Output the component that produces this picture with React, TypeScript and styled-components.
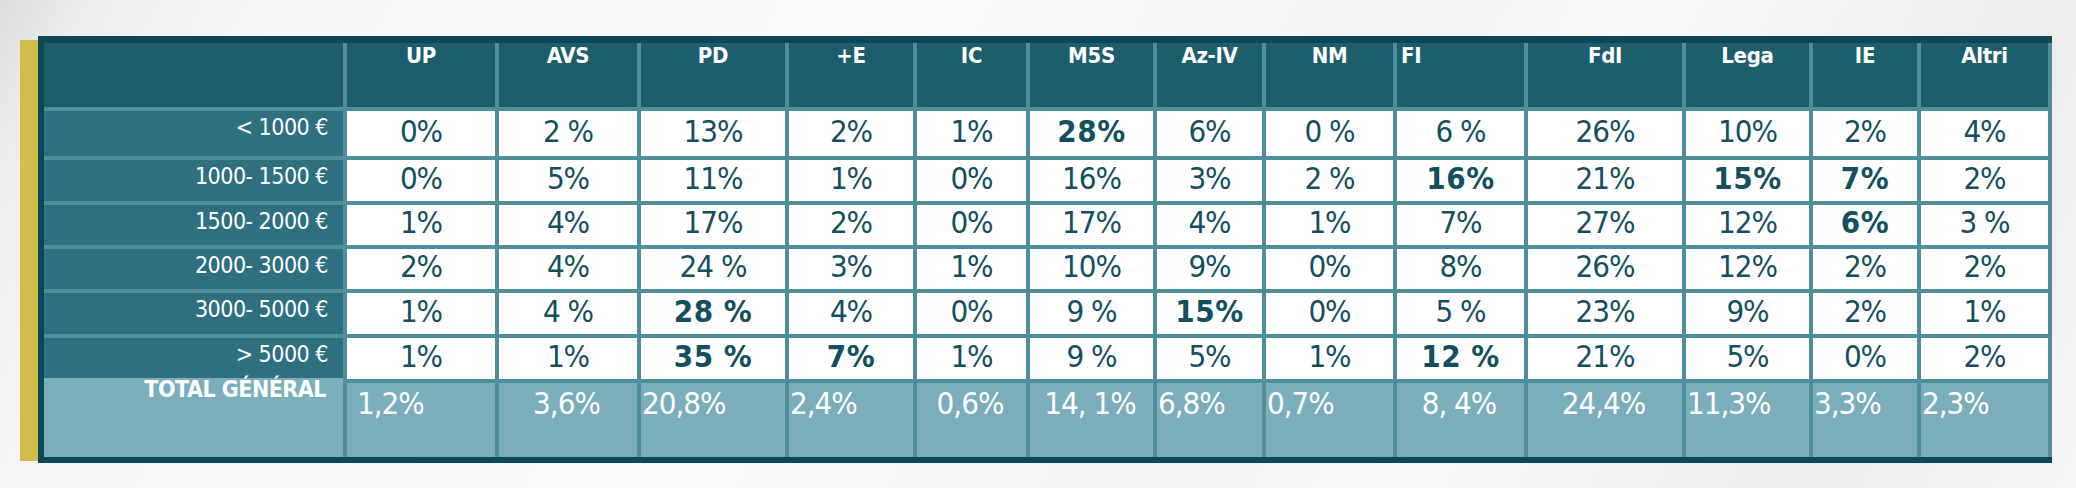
import { createGlobalStyle } from 'styled-components';
import styled from 'styled-components';

type Align = 'left' | 'center' | 'right';

const narrow =
	"'Liberation Sans Narrow', 'Arial Narrow', 'DejaVu Sans Condensed', 'Liberation Sans', sans-serif";
const condensed = "'DejaVu Sans Condensed', 'DejaVu Sans', 'Liberation Sans', sans-serif";

const parties = ['UP', 'AVS', 'PD', '+E', 'IC', 'M5S', 'Az-IV', 'NM', 'FI', 'FdI', 'Lega', 'IE', 'Altri'];
const widths = [148, 138, 144, 124, 109, 123, 105, 127, 127, 154, 123, 104, 127];

// '*' at the start marks a bold cell
const rows: { label: string; values: string[] }[] = [
	{
		label: '< 1000 €',
		values: ['0%', '2 %', '13%', '2%', '1%', '*28%', '6%', '0 %', '6 %', '26%', '10%', '2%', '4%'],
	},
	{
		label: '1000- 1500 €',
		values: ['0%', '5%', '11%', '1%', '0%', '16%', '3%', '2 %', '*16%', '21%', '*15%', '*7%', '2%'],
	},
	{
		label: '1500- 2000 €',
		values: ['1%', '4%', '17%', '2%', '0%', '17%', '4%', '1%', '7%', '27%', '12%', '*6%', '3 %'],
	},
	{
		label: '2000- 3000 €',
		values: ['2%', '4%', '24 %', '3%', '1%', '10%', '9%', '0%', '8%', '26%', '12%', '2%', '2%'],
	},
	{
		label: '3000- 5000 €',
		values: ['1%', '4 %', '*28 %', '4%', '0%', '9 %', '*15%', '0%', '5 %', '23%', '9%', '2%', '1%'],
	},
	{
		label: '> 5000 €',
		values: ['1%', '1%', '*35 %', '*7%', '1%', '9 %', '5%', '1%', '*12 %', '21%', '5%', '0%', '2%'],
	},
];

const totals: { value: string; align: Align; indent?: number }[] = [
	{ value: '1,2%', align: 'left', indent: 10 },
	{ value: '3,6%', align: 'center' },
	{ value: '20,8%', align: 'left' },
	{ value: '2,4%', align: 'left' },
	{ value: '0,6%', align: 'center' },
	{ value: '14, 1%', align: 'center' },
	{ value: '6,8%', align: 'left' },
	{ value: '0,7%', align: 'left' },
	{ value: '8, 4%', align: 'center' },
	{ value: '24,4%', align: 'center' },
	{ value: '11,3%', align: 'left' },
	{ value: '3,3%', align: 'left' },
	{ value: '2,3%', align: 'left' },
];

const rowHeights = [45, 41, 40, 40, 41, 41];

const App = () => {
	return (
		<>
			<GlobalStyle />
			<Page>
				<Accent />
				<Table>
					<Corner />
					{parties.map((p) => (
						<HeadCell key={p} $align={p === 'FI' ? 'left' : 'center'}>
							{p}
						</HeadCell>
					))}

					{rows.map((row) => [
						<LabelCell key={row.label}>{row.label}</LabelCell>,
						...row.values.map((v, i) => (
							<ValueCell key={row.label + i} $bold={v.startsWith('*')}>
								{v.replace('*', '')}
							</ValueCell>
						)),
					])}

					<TotalLabel>TOTAL GÉNÉRAL</TotalLabel>
					{totals.map((t, i) => (
						<TotalCell key={'t' + i} $align={t.align} $indent={t.indent ?? 1}>
							{t.value}
						</TotalCell>
					))}
				</Table>
			</Page>
		</>
	);
};

export default App;

const GlobalStyle = createGlobalStyle`
	html, body {
		margin: 0;
		padding: 0;
	}
	body {
		width: 2076px;
		height: 488px;
		overflow: hidden;
		background:
			linear-gradient(118deg, #dcdcdc 0%, #ededed 4%, #f7f7f7 12%, #fbfbfb 40%, #f3f3f3 62%, #fafafa 70%, #ececec 88%, #f6f6f6 100%);
	}
`;

const Page = styled.div`
	display: flex;
	align-items: flex-start;
	padding: 36px 0 0 20px;
`;

const Accent = styled.div`
	width: 18px;
	height: 421px;
	margin-top: 4px;
	background: #d2bc4b;
`;

const Table = styled.div`
	display: grid;
	grid-template-columns: 299px ${widths.map((w) => `${w}px`).join(' ')};
	grid-template-rows: 64px ${rowHeights.map((h) => `${h}px`).join(' ')} 74px;
	gap: 4px;
	padding-right: 4px;
	background: #4f8e9b;
	border-top: 7px solid #0d4858;
	border-left: 6px solid #0d4858;
	border-bottom: 6px solid #0d4858;
`;

const Corner = styled.div`
	background: #1d5e6d;
`;

const HeadCell = styled.div<{ $align: Align }>`
	background: #1d5e6d;
	color: #ffffff;
	font-family: ${condensed};
	font-stretch: condensed;
	font-weight: 700;
	font-size: 22px;
	letter-spacing: -0.3px;
	line-height: 1;
	padding: 2px 4px 0;
	text-align: ${({ $align }) => $align};
`;

const LabelCell = styled.div`
	background: #2e707f;
	color: #ffffff;
	font-family: ${narrow};
	font-stretch: condensed;
	font-size: 23px;
	letter-spacing: -0.5px;
	line-height: 1;
	text-align: right;
	padding: 5px 15px 0 0;
`;

const ValueCell = styled.div<{ $bold: boolean }>`
	display: flex;
	align-items: center;
	justify-content: center;
	padding-bottom: 6px;
	background: #ffffff;
	color: #134f5e;
	font-family: ${narrow};
	font-stretch: condensed;
	font-size: 31px;
	font-weight: ${({ $bold }) => ($bold ? 700 : 400)};
	letter-spacing: ${({ $bold }) => ($bold ? '0.5px' : '-1px')};
	white-space: pre;
`;

const TotalLabel = styled.div`
	background: #7aaeba;
	color: #ffffff;
	font-family: ${narrow};
	font-stretch: condensed;
	font-weight: 700;
	font-size: 23px;
	letter-spacing: -0.5px;
	line-height: 1;
	text-align: right;
	padding-right: 17px;
	margin-top: -5px;
`;

const TotalCell = styled.div<{ $align: Align; $indent: number }>`
	background: #7aaeba;
	color: #ffffff;
	font-family: ${narrow};
	font-stretch: condensed;
	font-size: 31px;
	letter-spacing: -1px;
	line-height: 1;
	padding: 5px 4px 0 ${({ $indent }) => $indent}px;
	text-align: ${({ $align }) => $align};
	white-space: pre;
`;
